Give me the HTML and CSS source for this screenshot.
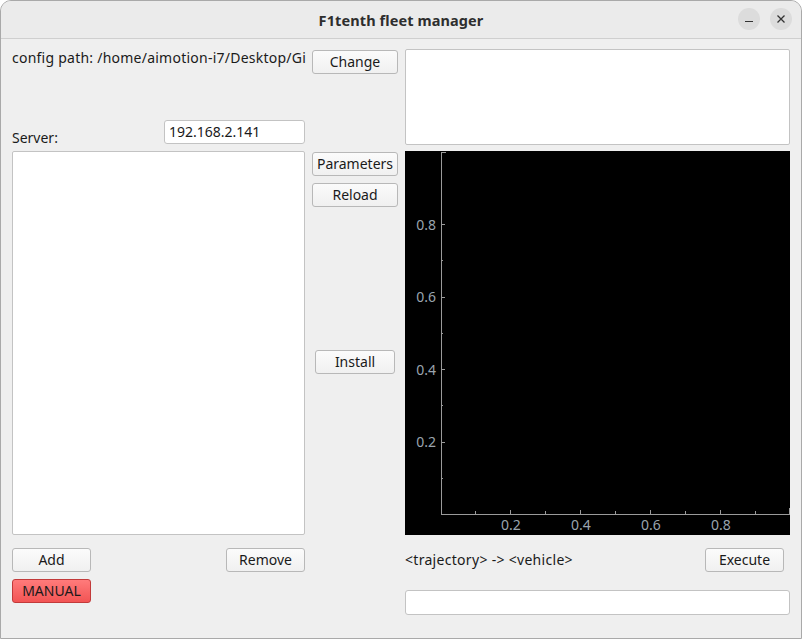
FILE: index.html
```html
<!DOCTYPE html>
<html>
<head>
<meta charset="utf-8">
<link rel="stylesheet" href="styles.css">
</head>
<body>
<div class="window">
  <div class="titlebar">
    <div class="title">F1tenth fleet manager</div>
    <div class="controls">
      <div class="ctl"><svg width="10" height="10" viewBox="0 0 10 10"><line x1="1" y1="7.5" x2="9" y2="7.5" stroke="#333" stroke-width="1.2"/></svg></div>
      <div class="ctl"><svg width="10" height="10" viewBox="0 0 10 10"><path d="M1.5 1.5 L8.5 8.5 M8.5 1.5 L1.5 8.5" stroke="#333" stroke-width="1.3"/></svg></div>
    </div>
  </div>
  <div class="content">
    <div class="row top">
      <div class="col left">
        <div class="path">config path: /home/aimotion-i7/Desktop/Gi</div>
        <div class="server">
          <span class="label">Server:</span>
          <div class="input ip">192.168.2.141</div>
        </div>
      </div>
      <div class="col mid">
        <button class="btn">Change</button>
      </div>
      <div class="col right">
        <div class="textbox"></div>
      </div>
    </div>
    <div class="row main">
      <div class="col left">
        <div class="list"></div>
      </div>
      <div class="col mid">
        <button class="btn">Parameters</button>
        <button class="btn gap">Reload</button>
        <button class="btn install">Install</button>
      </div>
      <div class="col right">
        <div class="plot">
          <svg width="385" height="384" viewBox="0 0 385 384">
            <g stroke="#9a9a9a" stroke-width="1" fill="none">
              <line x1="36.5" y1="1" x2="36.5" y2="363.5"/>
              <line x1="36" y1="363.5" x2="385" y2="363.5"/>
              <line x1="36" y1="1.5" x2="41" y2="1.5"/>
              <line x1="36" y1="73.5" x2="40" y2="73.5"/>
              <line x1="36" y1="109.5" x2="38" y2="109.5"/>
              <line x1="36" y1="146.5" x2="40" y2="146.5"/>
              <line x1="36" y1="182.5" x2="38" y2="182.5"/>
              <line x1="36" y1="218.5" x2="40" y2="218.5"/>
              <line x1="36" y1="254.5" x2="38" y2="254.5"/>
              <line x1="36" y1="291.5" x2="40" y2="291.5"/>
              <line x1="36" y1="327.5" x2="38" y2="327.5"/>
              <line x1="70.5" y1="363" x2="70.5" y2="360"/>
              <line x1="105.5" y1="363" x2="105.5" y2="359"/>
              <line x1="140.5" y1="363" x2="140.5" y2="360"/>
              <line x1="175.5" y1="363" x2="175.5" y2="359"/>
              <line x1="210.5" y1="363" x2="210.5" y2="360"/>
              <line x1="245.5" y1="363" x2="245.5" y2="359"/>
              <line x1="280.5" y1="363" x2="280.5" y2="360"/>
              <line x1="315.5" y1="363" x2="315.5" y2="359"/>
              <line x1="350.5" y1="363" x2="350.5" y2="360"/>
              <line x1="384.5" y1="363" x2="384.5" y2="357"/>
            </g>
            <g class="ticklbl" text-anchor="end">
              <text x="31" y="79">0.8</text>
              <text x="31" y="151">0.6</text>
              <text x="31" y="224">0.4</text>
              <text x="31" y="296">0.2</text>
            </g>
            <g class="ticklbl" text-anchor="middle">
              <text x="106" y="379">0.2</text>
              <text x="176" y="379">0.4</text>
              <text x="246" y="379">0.6</text>
              <text x="316" y="379">0.8</text>
            </g>
          </svg>
        </div>
      </div>
    </div>
    <div class="row bottom">
      <div class="col left">
        <div class="btnrow">
          <button class="btn small">Add</button>
          <button class="btn small">Remove</button>
        </div>
        <button class="btn small manual">MANUAL</button>
      </div>
      <div class="col mid"></div>
      <div class="col right">
        <div class="btnrow exec">
          <span class="traj">&lt;trajectory&gt; -&gt; &lt;vehicle&gt;</span>
          <button class="btn small">Execute</button>
        </div>
        <div class="input status"></div>
      </div>
    </div>
  </div>
</div>
</body>
</html>
```

FILE: styles.css
```css
html, body {
  margin: 0;
  padding: 0;
  background: #ffffff;
}
body {
  width: 802px;
  height: 639px;
  overflow: hidden;
  font-family: "Noto Sans", "DejaVu Sans", sans-serif;
  font-size: 14px;
  color: #1a1a1a;
}
.window {
  box-sizing: border-box;
  width: 802px;
  height: 639px;
  border: 1px solid #a9a9a9;
  border-radius: 11px 11px 0 0;
  background: #efefef;
  overflow: hidden;
  display: flex;
  flex-direction: column;
}
.titlebar {
  height: 37px;
  flex: none;
  background: #ebebeb;
  border-bottom: 1px solid #cfcfcf;
  position: relative;
  display: flex;
  align-items: center;
  justify-content: center;
}
.title {
  font-weight: bold;
  font-size: 14.5px;
  color: #2e2e2e;
  letter-spacing: 0.1px;
}
.controls {
  position: absolute;
  right: 9px;
  top: 7px;
  display: flex;
  gap: 10px;
}
.ctl {
  width: 22px;
  height: 22px;
  border-radius: 50%;
  background: #dcdcdc;
  display: flex;
  align-items: center;
  justify-content: center;
}
.content {
  padding: 10px 11px 0 11px;
  display: flex;
  flex-direction: column;
}
.row {
  display: flex;
  gap: 7px;
}
.col.left { width: 293px; display: flex; flex-direction: column; }
.col.mid { width: 86px; display: flex; flex-direction: column; }
.col.right { width: 385px; display: flex; flex-direction: column; }

.top { height: 96px; }
.path {
  white-space: nowrap;
  height: 20px;
  line-height: 18px;
  letter-spacing: 0.24px;
}
.server {
  margin-top: auto;
  display: flex;
  justify-content: space-between;
  align-items: flex-end;
  margin-bottom: 1px;
}
.label { line-height: 18px; margin-bottom: -3px; }
.input {
  box-sizing: border-box;
  background: #ffffff;
  border: 1px solid #c3c3c3;
  border-radius: 3px;
}
.ip {
  width: 141px;
  height: 24px;
  padding: 1px 0 0 4px;
  line-height: 20px;
  font-size: 14px;
}
.btn {
  box-sizing: border-box;
  height: 24px;
  width: 86px;
  padding: 0;
  margin: 0;
  font-family: inherit;
  font-size: 14px;
  color: #1a1a1a;
  border: 1px solid #b8b8b8;
  border-radius: 3px;
  background: linear-gradient(#fbfbfb, #f0f0f0);
  line-height: 20px;
}
.mid .btn:first-child { margin-top: 1px; }
.btn.gap { margin-top: 7px; }
.btn.install { width: 80px; margin: 143px 0 0 3px; }
.textbox {
  box-sizing: border-box;
  height: 96px;
  background: #ffffff;
  border: 1px solid #c3c3c3;
  border-radius: 2px;
}
.main { margin-top: 6px; height: 384px; }
.list {
  box-sizing: border-box;
  height: 384px;
  background: #ffffff;
  border: 1px solid #c3c3c3;
  border-radius: 2px;
}
.plot {
  width: 385px;
  height: 384px;
  background: #000000;
}
.plot svg { display: block; }
.ticklbl {
  font-family: "Noto Sans", "DejaVu Sans", sans-serif;
  font-size: 14px;
  fill: #9aa4ae;
}
.bottom { margin-top: 13px; }
.btnrow {
  display: flex;
  justify-content: space-between;
  align-items: center;
}
.btn.small { width: 79px; }
.manual {
  margin-top: 7px;
  background: linear-gradient(#ff7b7b, #f25454);
  border-color: #c23a3a;
}
.exec { padding-right: 6px; }
.traj { line-height: 20px; letter-spacing: 0.3px; }
.status {
  height: 25px;
  margin-top: 18px;
}
```
